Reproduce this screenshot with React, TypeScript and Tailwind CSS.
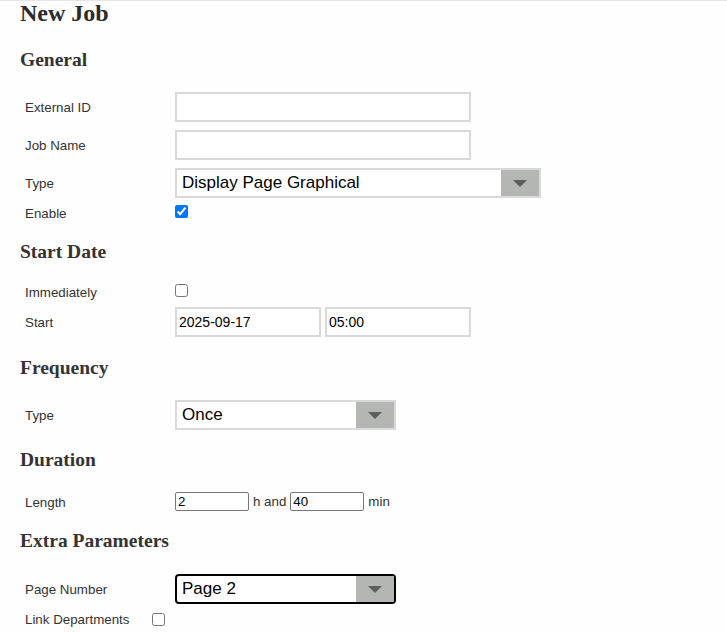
import { ReactNode } from "react";

const heading = "font-['Liberation_Serif',serif] font-bold text-[19.5px] leading-[24px] text-[#333] pl-5";
const label = "pl-[5px] pt-[2px] text-[13.33px] text-[#333]";
const boxInput =
  "h-[30px] border-2 border-[#d9d9d9] bg-white px-[2px] text-[14px] text-black outline-none";

const Row = ({ name, h, children }: { name: string; h: string; children?: ReactNode }) => (
  <div className={`grid grid-cols-[155px_1fr] items-center pl-5 ${h}`}>
    <div className={label}>{name}</div>
    <div className="flex items-center">{children}</div>
  </div>
);

const Select = ({ value, width, focused }: { value: string; width: string; focused?: boolean }) => (
  <div
    className={`relative h-[30px] ${width} ${
      focused ? "border-2 border-black rounded-[4px]" : "border-2 border-[#d9d9d9]"
    } bg-white`}
  >
    <select
      defaultValue={value}
      className="h-full w-full appearance-none bg-transparent pl-[5px] text-[17px] text-black outline-none"
    >
      <option>{value}</option>
    </select>
    <div className="pointer-events-none absolute right-0 top-0 flex h-full w-[38px] items-center justify-center bg-[#b4b6b4]">
      <svg width="14" height="7" viewBox="0 0 14 7">
        <path d="M0 0 L14 0 L7 7 Z" fill="#5b605d" />
      </svg>
    </div>
  </div>
);

export default function App() {
  return (
    <div className="min-h-[632px] w-full border-t border-[#e6e6e6] bg-[#fefefe] font-['Liberation_Sans',Arial,sans-serif]">
      <h1 className="pl-5 font-['Liberation_Serif',serif] text-[24px] font-bold leading-[24px] text-[#2b2b2b]">
        New Job
      </h1>

      <h2 className={`${heading} mt-[23px] mb-[16px]`}>General</h2>
      <Row name="External ID" h="h-[38px]">
        <input className={`${boxInput} w-[296px]`} />
      </Row>
      <Row name="Job Name" h="h-[38px]">
        <input className={`${boxInput} w-[296px]`} />
      </Row>
      <Row name="Type" h="h-[38px]">
        <Select value="Display Page Graphical" width="w-[366px]" />
      </Row>
      <Row name="Enable" h="h-[20px]">
        <input type="checkbox" defaultChecked className="h-[13px] w-[13px] -mt-[2px]" />
      </Row>

      <h2 className={`${heading} mt-[18px] mb-[16px]`}>Start Date</h2>
      <Row name="Immediately" h="h-[23px]">
        <input type="checkbox" className="h-[13px] w-[13px] -mt-[3px]" />
      </Row>
      <Row name="Start" h="h-[38px]">
        <input className={`${boxInput} w-[146px] pl-[2px]`} defaultValue="2025-09-17" />
        <input className={`${boxInput} ml-[4px] w-[146px] pl-[2px]`} defaultValue="05:00" />
      </Row>

      <h2 className={`${heading} mt-[15px] mb-[16px]`}>Frequency</h2>
      <Row name="Type" h="h-[38px]">
        <Select value="Once" width="w-[221px]" />
      </Row>

      <h2 className={`${heading} mt-[14px] mb-[17px]`}>Duration</h2>
      <Row name="Length" h="h-[26px]">
        <input
          className="h-[19px] w-[74px] rounded-[2px] border border-[#767676] bg-white px-[2px] text-[13.33px] text-black outline-none"
          defaultValue="2"
        />
        <span className="mx-[4px] text-[13.33px] text-[#333]">h and</span>
        <input
          className="h-[19px] w-[74px] rounded-[2px] border border-[#767676] bg-white px-[2px] text-[13.33px] text-black outline-none"
          defaultValue="40"
        />
        <span className="ml-[4px] text-[13.33px] text-[#333]">min</span>
      </Row>

      <h2 className={`${heading} mt-[14px] mb-[17px]`}>Extra Parameters</h2>
      <Row name="Page Number" h="h-[38px]">
        <Select value="Page 2" width="w-[221px]" focused />
      </Row>
      <div className="flex h-[22px] items-center pl-5">
        <span className={label}>Link Departments</span>
        <input type="checkbox" className="ml-[23px] h-[13px] w-[13px]" />
      </div>
    </div>
  );
}
